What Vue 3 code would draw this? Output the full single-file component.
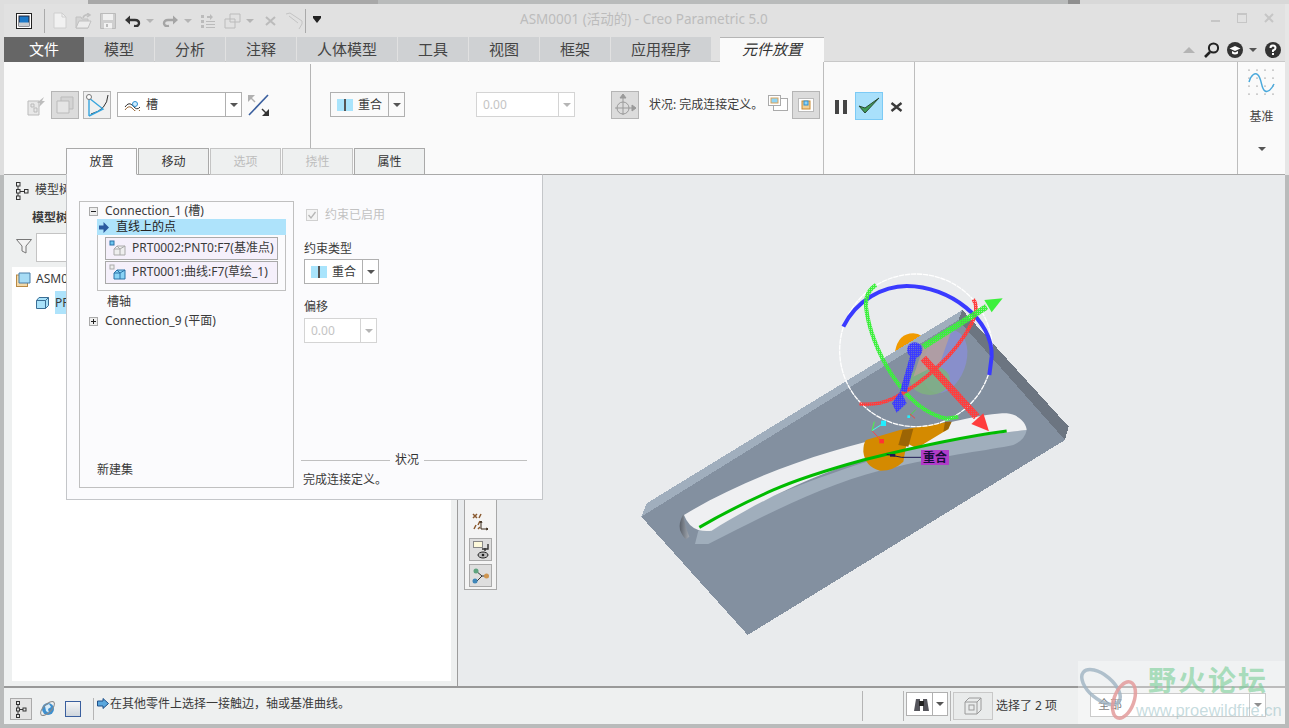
<script setup>
const tabs = [
  { t: '模型', c: '' }, { t: '分析', c: '' }, { t: '注释', c: '' }, { t: '人体模型', c: 'wide' },
  { t: '工具', c: '' }, { t: '视图', c: '' }, { t: '框架', c: '' }, { t: '应用程序', c: 'wide' }
]
const subTabs = [
  { t: '放置', c: 'on' }, { t: '移动', c: '' }, { t: '选项', c: 'off' }, { t: '挠性', c: 'off' }, { t: '属性', c: '' }
]
const dots = [[1,1],[9,1],[17,1],[25,1],[1,9],[9,9],[17,9],[25,9],[1,17],[9,17],[17,17],[25,17],[1,25],[9,25],[17,25],[25,25]]
</script>

<template>
  <div class="window">
    <header class="title">
      <div class="qat">
        <svg class="appicon" width="16" height="16" viewBox="0 0 16 16"><rect x=".5" y=".5" width="15" height="15" fill="#fff" stroke="#222"/><rect x="3" y="3" width="10" height="10" fill="#1b78c8" stroke="#223"/><path d="M3 9.500h6.500V13H3zM9.500 9.500H13V13H9.500z" fill="#c9ccd0"/></svg>
        <i class="qsep first"></i>
        <svg class="q" width="14" height="17" viewBox="0 0 14 17"><path d="M1 1h8l4 4v11H1z" fill="#f1f1f1" stroke="#cfcfcf"/><path d="M9 1v4h4" fill="none" stroke="#cfcfcf"/></svg>
        <svg class="q" width="17" height="16" viewBox="0 0 17 16"><path d="M1 4h5l1 2h6v9H1z" fill="#d4d4d4" stroke="#c0c0c0"/><path d="M1 15l3-7h12l-3 7z" fill="#ececec" stroke="#c0c0c0"/><path d="M8 5q1-4 6-3m-2-2 3 2-3 2" fill="none" stroke="#c0c0c0" stroke-width="1.500"/></svg>
        <svg class="q" width="16" height="16" viewBox="0 0 16 16"><path d="M.5.5h15v15H.5z" fill="#cfcfcf" stroke="#bbb"/><rect x="3" y="1" width="10" height="6" fill="#f0f0f0"/><rect x="4" y="10" width="8" height="5.500" fill="#f2f2f2"/><rect x="6" y="11" width="2" height="3" fill="#bbb"/></svg>
        <svg class="q" width="17" height="12" viewBox="0 0 17 12"><path d="M5 5h6q4 0 4 3.300T10 11" fill="none" stroke="#333" stroke-width="2.400"/><path d="M1 5l5-4.500v9z" fill="#333"/></svg>
        <i class="tri light"></i>
        <svg class="q" width="17" height="12" viewBox="0 0 17 12"><path d="M12 5H6Q2 5 2 8.300T7 11" fill="none" stroke="#a5a5a5" stroke-width="2.400"/><path d="M16 5l-5-4.500v9z" fill="#a5a5a5"/></svg>
        <i class="tri light"></i>
        <svg class="q" width="16" height="16" viewBox="0 0 16 16" fill="#bbb"><path d="M1 2h3v3H1zm0 5h3v3H1zm0 5h3v3H1zm5-4h9v1H6zm0 3h9v1H6zm0 3h9v1H6zM7 3h3V1l3 3-3 3V5H7z"/></svg>
        <svg class="q" width="17" height="16" viewBox="0 0 17 16" fill="none" stroke="#bbb"><path d="M6 1h10v8H6zM1 6h10v9H1z"/></svg>
        <i class="tri light"></i>
        <svg class="q cl" width="13" height="10" viewBox="0 0 13 10" fill="none" stroke="#bbb" stroke-width="2"><path d="M2 1l9 8m0-8L2 9"/></svg>
        <svg class="q ruler" width="18" height="18" viewBox="0 0 18 18" fill="none" stroke="#c4c4c4"><path d="M1 2l4-1 12 8v3l-3 5M4 4l9 7"/></svg>
        <i class="qsep"></i>
        <span class="dropmark"></span>
      </div>
      <div class="caption">ASM0001 (活动的) - Creo Parametric 5.0</div>
      <div class="winctl">
        <i class="wmin"></i><i class="wmax"></i>
        <svg width="10" height="10" viewBox="0 0 10 10"><path d="M1 1l8 8m0-8L1 9" stroke="#c6c6c6" stroke-width="2"/></svg>
      </div>
    </header>

    <nav class="tabs">
      <div class="tab file">文件</div>
      <div v-for="x in tabs" :key="x.t" class="tab" :class="x.c">{{ x.t }}</div>
      <div class="tab active">元件放置</div>
      <div class="tools">
        <svg width="12" height="8" viewBox="0 0 12 8"><path d="M0 7l6-6 6 6z" fill="#b4b4b4"/></svg>
        <svg width="15" height="16" viewBox="0 0 15 16" fill="none" stroke="#222" stroke-width="2"><circle cx="9.500" cy="6" r="4.600"/><path d="M6 10l-5 5" stroke-width="2.600"/></svg>
        <svg width="16" height="16" viewBox="0 0 16 16"><circle cx="8" cy="8" r="8" fill="#333"/><path d="M2.500 6.500 8 4l5.500 2.500L8 9z" fill="#fff"/><path d="M5 9v2.500q3 2 6 0V9L8 10.500z" fill="#fff"/></svg>
        <i class="tri"></i>
        <svg width="16" height="16" viewBox="0 0 16 16"><circle cx="8" cy="8" r="8" fill="#333"/><path d="M5.500 6q0-2.500 2.500-2.500T10.500 6Q10.500 7.500 8 8.500v1.500" fill="none" stroke="#fff" stroke-width="2"/><rect x="7" y="11" width="2" height="2" fill="#fff"/></svg>
      </div>
    </nav>

    <section class="ribbon">
      <div class="group g1">
        <svg class="r-lit" width="19" height="20" viewBox="0 0 19 20"><path d="M1 5h11v14H1z" fill="#e8e8e8" stroke="#bbb"/><path d="M4 8h3v3H4zm3 4h3v4H7z" fill="none" stroke="#bbb"/><path d="M12 5l5-4-2 4h3l-6 6 1-4h-3z" fill="#bdbdbd"/></svg>
        <div class="tbtn gray">
          <svg width="18" height="18" viewBox="0 0 18 18" fill="none" stroke="#bbb"><path d="M5 1h12v12H5z" fill="#d4d4d4"/><path d="M1 5h12v12H1z" fill="#e5e5e5"/></svg>
        </div>
        <div class="tbtn gray">
          <svg width="24" height="24" viewBox="0 0 24 24" fill="none"><path d="M23 2Q22 17 6 21" stroke="#333"/><path d="M4 5v18M4 5l14 11L4 23" stroke="#36a4dd" stroke-width="1.400"/><circle cx="4" cy="4" r="2.500" fill="#fff" stroke="#777"/></svg>
        </div>
        <div class="sel jt">
          <div class="sel-main">
            <svg width="17" height="12" viewBox="0 0 17 12" fill="none"><path d="M1 8q4-6 8-1t7 1" stroke="#333"/><path d="M1 11q4-6 8-1t7 1" stroke="#9a6a3a"/><circle cx="11" cy="5" r="2.500" fill="#cfeeff" stroke="#2f8fd0"/></svg>
            <span>槽</span>
          </div>
          <div class="sel-arrow"><i class="tri"></i></div>
        </div>
        <svg class="flip" width="23" height="23" viewBox="0 0 23 23"><path d="M21 1 2 21" stroke="#3a5f9e" stroke-width="1.600"/><path d="M1 1h7L1 8z" fill="#b0b0b0"/><path d="M4 4l4 4" stroke="#b0b0b0" stroke-width="1.500"/><path d="M22 22h-7l7-7z" fill="#333"/><path d="M19 19l-4-4" stroke="#333" stroke-width="1.500"/></svg>
      </div>

      <div class="group g2">
        <div class="sel con">
          <div class="sel-main">
            <span class="coin"></span><span>重合</span>
          </div>
          <div class="sel-arrow"><i class="tri"></i></div>
        </div>
        <div class="sel num dis">
          <div class="sel-main">0.00</div>
          <div class="sel-arrow"><i class="tri light"></i></div>
        </div>
        <div class="tbtn gray compass">
          <svg width="24" height="24" viewBox="0 0 24 24" fill="none" stroke="#9a9a9a"><circle cx="10" cy="15" r="6"/><path d="M10 5v17M2 15h17"/><path d="M10 1l3 4H7zM23 15l-4 3v-6z" fill="#9a9a9a"/></svg>
        </div>
        <span class="stat">状况: 完成连接定义。</span>
        <svg class="pv" width="20" height="16" viewBox="0 0 20 16"><rect x="5.500" y="3.500" width="14" height="12" fill="#fff" stroke="#aaa"/><rect x=".5" y=".5" width="12" height="10" fill="#fff" stroke="#aaa"/><rect x="3" y="3" width="7" height="5" fill="#8fd4f5" stroke="#d9a35a"/></svg>
        <div class="tbtn gray pv2">
          <svg width="16" height="14" viewBox="0 0 16 14"><rect x=".5" y=".5" width="15" height="13" fill="#fff" stroke="#bbb"/><rect x="4" y="3" width="8" height="8" fill="#f1cf93" stroke="#c98b35"/><rect x="6" y="3" width="4" height="4" fill="#8fd4f5" stroke="#2f8fd0"/></svg>
        </div>
      </div>

      <div class="group g3">
        <div class="pause"><i></i><i></i></div>
        <div class="okbtn">
          <svg width="24" height="20" viewBox="0 0 24 20"><path d="M2 10l6 7L22 2l-14 10z" fill="#3f9c58" stroke="#2b4a33"/></svg>
        </div>
        <svg class="cancel" width="13" height="10" viewBox="0 0 13 10"><path d="M1.500 1l10 8m0-8-10 8" stroke="#3a3a3a" stroke-width="2.400"/></svg>
      </div>

      <div class="group g4"></div>

      <div class="group g5">
        <svg width="28" height="27" viewBox="0 0 28 27"><g fill="#555"><circle v-for="d in dots" :key="d.join()" :cx="d[0]" :cy="d[1]" r=".6"/></g><path d="M1 13C3 6 7 3 10 6 14 10 13 20 17 22 21 24 24 19 26 15" fill="none" stroke="#4aa9dc" stroke-width="1.500"/></svg>
        <span class="base">基准</span>
        <i class="tri base-tri"></i>
      </div>
    </section>

    <main class="main">
      <aside class="left">
        <div class="lh">
          <svg width="14" height="18" viewBox="0 0 14 18" fill="none" stroke="#333"><rect x="1.500" y=".5" width="3.500" height="3.500"/><rect x="1.500" y="7.500" width="3.500" height="3.500"/><rect x="9.500" y="7.500" width="3.500" height="3.500"/><rect x="1.500" y="14" width="3.500" height="3.500"/><path d="M3 4v3m0 4v3m2-4.500h4"/></svg>
          <span>模型树</span>
        </div>
        <div class="lsub">模型树</div>
        <div class="lfilter">
          <svg width="16" height="15" viewBox="0 0 16 15"><path d="M.5.5h15L10 7v7l-4-2V7z" fill="#f2f2f2" stroke="#777"/></svg>
          <div class="finput"></div>
        </div>
        <div class="tree">
          <div class="trow r1">
            <svg width="15" height="15" viewBox="0 0 15 15"><rect x=".5" y="3" width="11" height="11.500" fill="#f3d9a8" stroke="#b98a45"/><path d="M3 1h11v10H3z" fill="#a7dcf5" stroke="#4a7ea8"/></svg>
            <span>ASM0001.ASM</span>
          </div>
          <div class="trow r2">
            <svg width="13" height="12" viewBox="0 0 13 12"><path d="M3 .5h9.500v8l-3 3H.5v-8z" fill="#a9e2fa" stroke="#3b6f96"/><path d="M.5 3.500h9v8m0-8 3-3" fill="none" stroke="#3b6f96"/></svg>
            <span class="hl">PRT0001.PRT</span>
          </div>
        </div>
      </aside>

      <div class="scene">
        <svg class="canvas" width="827" height="511" viewBox="458 175 827 511">
          <defs>
            <pattern id="hr" width="6" height="6" patternUnits="userSpaceOnUse"><path d="M0 0h6v3H3v3H0z" fill="#ff3d3d"/><rect x="3" y="3" width="3" height="3" fill="#ff3d3d" opacity=".45"/></pattern>
            <pattern id="hg" width="6" height="6" patternUnits="userSpaceOnUse"><path d="M0 0h6v3H3v3H0z" fill="#3cf03c"/><rect x="3" y="3" width="3" height="3" fill="#3cf03c" opacity=".45"/></pattern>
            <pattern id="hb" width="6" height="6" patternUnits="userSpaceOnUse"><path d="M0 0h6v3H3v3H0z" fill="#3c3cff"/><rect x="3" y="3" width="3" height="3" fill="#3c3cff" opacity=".45"/></pattern>
            <linearGradient id="wall" x1="0" x2="1"><stop offset="0" stop-color="#5a616b"/><stop offset="1" stop-color="#a3a9b1"/></linearGradient>
          </defs>
          <g transform="translate(630 270) scale(.33333)">
            <path d="M795 245Q805 190 850 190Q880 192 885 215Z" fill="#f09a00"/>
            <g shape-rendering="crispEdges">
              <path d="M997 120 1316 470 1305 510 985 150Z" fill="#6c7581"/>
              <path d="M34 740 985 150 1305 510 353 1095Z" fill="#8390a0"/>
              <path d="M34 740 50 700 997 120 985 150Z" fill="#a0aebd"/>
            </g>
            <path d="M195 822H235C400 740 600 630 800 590 950 555 1080 540 1150 525Q1185 510 1190 480L1000 500C700 560 400 680 205 782Z" fill="#a0aebc"/>
            <path d="M162 735C350 620 600 535 800 495 950 460 1060 430 1130 430 1165 432 1190 460 1190 480 1050 495 850 525 700 570 520 625 350 715 245 782Q225 785 205 780 175 770 162 735Z" fill="#eff0f2"/>
            <path d="M160 733Q145 760 150 780 158 800 168 808L178 800Q165 770 160 733Z" fill="url(#wall)"/>
            <path d="M708 510 810 480 960 455 950 480 860 535 830 520 820 575Q790 603 750 602 705 590 700 545 700 520 708 510Z" fill="#d48a00"/>
            <path d="M818 480 850 476 835 530 805 525Z" fill="#9c6505"/>
            <path d="M945 455H965L955 478 940 485Z" fill="#9c6505"/>
            <path d="M208 772C280 730 350 695 430 660 520 620 620 592 700 570 860 530 1000 500 1130 483" fill="none" stroke="#00bb00" stroke-width="9"/>

            <ellipse cx="945" cy="275" rx="62" ry="98" transform="rotate(20 945 275)" fill="#8a8fd6" opacity=".8"/>
            <ellipse cx="900" cy="330" rx="60" ry="45" fill="#7fb27f" opacity=".85"/>
            <path d="M880 230 965 180 930 280 850 320Z" fill="#b9a09a" opacity=".8"/>

            <circle cx="858" cy="241" r="229" fill="none" stroke="#fff" stroke-width="4" stroke-dasharray="16 2"/>
            <path d="M640 170C680 90 760 48 830 48 960 48 1090 150 1085 260L1078 315" fill="none" stroke="#3a3aff" stroke-width="12"/>
            <path d="M738 45Q705 65 708 110C720 230 820 420 950 446L985 440" fill="none" stroke="url(#hg)" stroke-width="12"/>
            <path d="M1030 88Q1048 115 1025 160C980 250 880 340 790 385Q740 408 688 402" fill="none" stroke="url(#hr)" stroke-width="11"/>

            <path d="M880 230 1070 110" stroke="url(#hg)" stroke-width="18"/>
            <path d="M1118 85 1063 90 1085 127Z" fill="#3cf03c"/>
            <path d="M880 265 1040 440" stroke="url(#hr)" stroke-width="22"/>
            <path d="M1077 484 1024 462 1060 430Z" fill="#ff3d3d"/>
            <path d="M850 260 820 365" stroke="url(#hb)" stroke-width="20"/>
            <circle cx="854" cy="240" r="23" fill="url(#hb)"/>
            <path d="M812 362 830 400 800 428 786 400Z" fill="url(#hb)"/>

            <path d="M726 482 755 513" stroke="#f44" stroke-width="3"/>
            <rect x="748" y="507" width="14" height="13" fill="#f33"/>
            <path d="M726 482 760 460" stroke="#4fe" stroke-width="3"/>
            <path d="M726 482 733 455" stroke="#4f4" stroke-width="3"/>
            <rect x="753" y="452" width="15" height="16" fill="#2ef"/>
            <path d="M837 440 858 418" stroke="#4d4" stroke-width="3"/>
            <path d="M840 432 855 445" stroke="#e44" stroke-width="3"/>
            <rect x="832" y="436" width="8" height="8" fill="#2ef"/>
            <path d="M770 553 815 562H873" fill="none" stroke="#1c1850" stroke-width="3"/>
            <path d="M780 552h16v8h-16z" fill="#1c1850"/>
          </g>
          <rect x="921" y="450" width="28" height="15" fill="#b13cc9"/>
          <text x="935" y="462" class="lbl" text-anchor="middle">重合</text>
        </svg>

        <div class="float">
          <svg class="fl-i" width="18" height="20" viewBox="0 0 18 20" fill="none" stroke-width="1.500"><path d="M1 1l4 4m0-4L1 5M9 1 7 5M8 8 6 12M2 16l2-4M6 16l2-2" stroke="#8a5a30"/><path d="M9 8v8h7M9 8l-1 2m1-2 1 2m6 6-2-1m2 1-2 1" stroke="#3a2a1a" stroke-width="1"/></svg>
          <div class="fbtn">
            <svg width="16" height="18" viewBox="0 0 16 18" fill="none"><rect x=".5" y=".5" width="9" height="6" fill="#fdf9da" stroke="#888"/><path d="M15 3v5H9m3-1v3" stroke="#333" stroke-width="1.400"/><ellipse cx="10" cy="14" rx="5" ry="3" fill="#bbb" stroke="#222"/><circle cx="10" cy="14" r="1.300" fill="#222"/></svg>
          </div>
          <div class="fbtn">
            <svg width="18" height="16" viewBox="0 0 18 16" fill="none"><path d="M4 3l6 5-6 6m6-6h4" stroke="#333"/><circle cx="4" cy="3" r="2.500" fill="#5fa37f"/><circle cx="3" cy="13" r="2.500" fill="#3f86b8"/><circle cx="14.500" cy="8" r="2.500" fill="#cf9550"/></svg>
          </div>
        </div>
      </div>
    </main>

    <footer class="status">
      <div class="sb-btn">
        <svg width="12" height="17" viewBox="0 0 12 17" fill="none" stroke="#333"><rect x="1.500" y=".5" width="3" height="3"/><rect x="1.500" y="7" width="3" height="3"/><rect x="8" y="7" width="3" height="3"/><rect x="1.500" y="13.500" width="3" height="3"/><path d="M3 3.500V7m0 3v3.500m1.500-5H8"/></svg>
      </div>
      <svg class="globe" width="17" height="17" viewBox="0 0 17 17"><circle cx="9" cy="9" r="6" fill="#3e8fce"/><path d="M6 6l4-2 2 3-3 2 1 4-3-2z" fill="#d8ecf8"/><ellipse cx="8.500" cy="8.500" rx="9" ry="4" transform="rotate(-45 8.500 8.500)" fill="none" stroke="#8a8a8a"/></svg>
      <i class="blank"></i>
      <i class="vsep a"></i>
      <svg class="sarrow" width="12" height="11" viewBox="0 0 12 11"><path d="M.5 3h5.500V.5L11.500 5.500 6 10.500V8H.5z" fill="#5aa7dd" stroke="#1e4f88"/></svg>
      <span class="msg">在其他零件上选择一接触边，轴或基准曲线。</span>
      <i class="vsep b"></i>
      <i class="vsep c"></i>
      <div class="sel bino">
        <div class="sel-main">
          <svg width="17" height="15" viewBox="0 0 17 15"><path d="M1 14 3 2h4v12zM10 14V2h4l2 12z" fill="#55555c"/><rect x="6" y="4" width="5" height="5" fill="#222"/></svg>
        </div>
        <div class="sel-arrow"><i class="tri"></i></div>
      </div>
      <i class="vsep d"></i>
      <div class="cubebtn">
        <svg width="18" height="18" viewBox="0 0 18 18" fill="none" stroke="#9a9a9a"><path d="M1 5 5 1h12v12l-4 4H1z"/><path d="M1 5h12v12m0-12 4-4"/><rect x="5" y="8" width="5" height="5"/></svg>
      </div>
      <span class="selinfo">选择了 2 项</span>
      <div class="sel filter">
        <div class="sel-main">全部</div>
        <div class="sel-arrow"><i class="tri"></i></div>
      </div>
    </footer>

    <div class="popup">
      <div class="ptabs">
        <div v-for="x in subTabs" :key="x.t" class="ptab" :class="x.c">{{ x.t }}</div>
      </div>
      <div class="pbody">
        <div class="pleft">
          <div class="node"><i class="box minus"></i><span>Connection_1 (槽)</span></div>
          <div class="hrow">
            <svg width="10" height="11" viewBox="0 0 10 11"><path d="M0 3.500h4.500V0L10 5.500 4.500 11V7.500H0z" fill="#2a5aa0"/></svg>
            <span>直线上的点</span>
          </div>
          <div class="refs">
            <div class="ref">
              <svg width="19" height="17" viewBox="0 0 19 17"><path d="M8 6h8v9H5V9zM8 6l3 3M5 9h6v6m0-6 5-3" fill="#eee" stroke="#aaa"/><rect x="1" y="1" width="4" height="4" fill="#6ec6f0" stroke="#2a72a8"/></svg>
              <span>PRT0002:PNT0:F7(基准点)</span>
            </div>
            <div class="ref second">
              <svg width="19" height="17" viewBox="0 0 19 17"><path d="M8 6h8v9H5V9zM8 6l3 3M5 9h6v6m0-6 5-3" fill="#8ad3f5" stroke="#2a72a8"/><rect x="1" y="1" width="4" height="4" fill="#eee" stroke="#aaa"/></svg>
              <span>PRT0001:曲线:F7(草绘_1)</span>
            </div>
          </div>
          <div class="axis">槽轴</div>
          <div class="node n2"><i class="box plus"></i><span>Connection_9 (平面)</span></div>
          <div class="newset">新建集</div>
        </div>
        <div class="pright">
          <label class="chk">
            <svg width="12" height="12" viewBox="0 0 12 12"><rect x=".5" y=".5" width="11" height="11" fill="#f4f4f4" stroke="#d0d0d0"/><path d="M2.500 6l2.500 3 4.500-6" fill="none" stroke="#b5b5b5" stroke-width="1.300"/></svg>
            <span>约束已启用</span>
          </label>
          <div class="fl t1">约束类型</div>
          <div class="sel con2">
            <div class="sel-main"><span class="coin"></span><span>重合</span></div>
            <div class="sel-arrow"><i class="tri"></i></div>
          </div>
          <div class="fl t2">偏移</div>
          <div class="sel num2 dis">
            <div class="sel-main">0.00</div>
            <div class="sel-arrow"><i class="tri light"></i></div>
          </div>
          <div class="legend"><i class="lg1"></i><span>状况</span><i></i></div>
          <div class="done">完成连接定义。</div>
        </div>
      </div>
    </div>

    <div class="mark">
      <svg class="mark-logo" width="60" height="60" viewBox="0 0 60 60" fill="none"><ellipse cx="22" cy="24" rx="23" ry="12" transform="rotate(40 22 24)" stroke="#9fb3c2" stroke-width="3.500" opacity=".8"/><ellipse cx="45" cy="37" rx="10" ry="19" transform="rotate(20 45 37)" stroke="#e39b9b" stroke-width="3.500" opacity=".85"/></svg>
      <div class="mark-cn">野火论坛</div>
      <div class="mark-en">www.proewildfire.cn</div>
    </div>
  </div>
</template>

<style>
html, body { margin: 0; overflow: hidden; background: #b9bbbb; }
</style>

<style scoped>
.window {
  position: relative; box-sizing: border-box; width: 1289px; height: 728px; padding: 4px;
  display: flex; flex-direction: column; overflow: hidden;
  background:
    linear-gradient(90deg, #dedede 0 88px, #a8a8a8 88px 378px, #b9bbbb 378px 1068px, #8f8f8f 1068px 1080px, #d8d8d8 1080px) 0 0 / 100% 4px no-repeat,
    linear-gradient(#dedede, #dedede) 0 0 / 4px 175px no-repeat,
    linear-gradient(#e6e6e6, #e6e6e6) 100% 0 / 4px 175px no-repeat,
    #b9bbbb;
  font: 12px/1.2 "Noto Sans", "Noto Sans CJK SC", sans-serif; color: #3a3a3a;
}
i { display: block; font-style: normal; }
.tri { width: 0; height: 0; border: 4px solid transparent; border-top: 4px solid #555; border-bottom: 0; }
.tri.light { border-top-color: #b5b5b5; }

.title { position: relative; flex: none; height: 33px; background: #e1e1e1; display: flex; align-items: center; }
.qat { display: flex; align-items: center; padding-left: 12px; height: 33px; }
.qsep { width: 1px; height: 24px; background: #aaa; margin-left: 2px; }
.qsep.first { margin-left: 12px; margin-right: 8px; }
.q { flex: none; margin-right: 8px; }
.qat .tri { margin: 0 8px 0 -3px; }
.qat .cl { margin-left: 2px; }
.qat .ruler { margin-right: 0; }
.dropmark { margin-left: 7px; width: 0; height: 0; border: 4px solid transparent; border-top: 5px solid #222; border-bottom: 0; box-shadow: 0 -2px 0 0 #222; }
.caption { position: absolute; left: 516px; top: 7px; font-size: 13.500px; color: #bcbcbc; white-space: nowrap; }
.winctl { margin-left: auto; display: flex; align-items: center; gap: 17px; padding-right: 11px; margin-bottom: 6px; }
.wmin { width: 9px; height: 2px; background: #c6c6c6; margin-top: 6px; }
.wmax { width: 8px; height: 7px; border: 1px solid #c6c6c6; border-top-width: 2px; }

.tabs { flex: none; height: 25px; display: flex; background: #e1e1e1; box-shadow: inset 0 -1px 0 #c8c8c8; }
.tab { box-sizing: border-box; width: 70px; padding-bottom: 2px; margin-right: 1px; background: #cfd1d3; font-size: 15px; color: #444; display: flex; align-items: center; justify-content: center; }
.tab.wide { width: 100px; }
.tab.file { width: 80px; margin-right: 0; background: #666; color: #fff; }
.tab.active { width: 104px; margin-left: 8px; background: #fafafa; border-top: 1px solid #b5b5b5; font-style: italic; color: #333; }
.tools { margin-left: auto; display: flex; align-items: center; gap: 8px; padding-right: 4px; }
.tools svg:first-child { margin-right: 1px; }
.tools .tri { margin-left: -2px; }

.ribbon { flex: none; height: 113px; box-sizing: border-box; display: flex; background: #fafafa; border-bottom: 1px solid #a8a8a8; }
.group { display: flex; align-items: flex-start; padding-top: 29px; box-sizing: border-box; }
.g1 { width: 307px; padding-left: 23px; height: 84px; border-right: 1px solid #b5b5b5; margin-top: 2px; padding-top: 27px; }
.g2 { width: 512px; padding-left: 19px; }
.g3 { width: 91px; border-left: 1px solid #bdbdbd; padding-left: 11px; height: 112px; }
.g4 { width: 323px; border-left: 1px solid #bdbdbd; }
.g5 { flex: 1; border-left: 1px solid #bdbdbd; flex-direction: column; align-items: center; padding-top: 7px; }
.r-lit { margin-top: 5px; margin-right: 5px; }
.tbtn { flex: none; width: 26px; height: 26px; border: 1px solid #b5b5b5; display: flex; align-items: center; justify-content: center; margin-right: 4px; }
.tbtn.gray { background: #dcdcdc; }
.g1 .tbtn:nth-of-type(2) { background: #f0f0f0; margin-right: 6px; }

.sel { flex: none; box-sizing: border-box; height: 25px; display: flex; background: #fff; border: 1px solid #b0b0b0; }
.sel-main { flex: 1; min-width: 0; display: flex; align-items: center; gap: 5px; padding: 1px 0 0 6px; }
.sel-arrow { flex: none; width: 15px; border-left: 1px solid #b0b0b0; display: flex; align-items: center; justify-content: center; }
.jt { width: 125px; margin-top: 1px; }
.flip { margin: 3px 0 0 5px; }
.con { width: 75px; margin: 1px 71px 0 0; background: #fafafa; }
.coin { width: 16px; height: 12px; background: linear-gradient(90deg, #a9e4fc 0 7px, #555 7px 9px, #a9e4fc 9px); }
.num { width: 99px; margin: 1px 36px 0 0; }
.dis { border-color: #d4d4d4; color: #c4c4c4; }
.dis .sel-arrow { border-color: #d4d4d4; }
.compass { margin-right: 10px; }
.stat { padding-top: 7px; white-space: nowrap; width: 119px; }
.pv { margin: 4px 4px 0 0; }
.pv2 { margin: 0; }
.pause { display: flex; gap: 4px; margin-top: 9px; }
.pause i { width: 4px; height: 14px; background: #444; }
.okbtn { box-sizing: border-box; width: 28px; height: 28px; margin: 1px 7px 0 8px; background: #a9e0fb; border: 1px solid #7ccaf5; display: flex; align-items: center; justify-content: center; }
.cancel { margin-top: 11px; }
.base { margin-top: 14px; color: #444; }
.base-tri { margin-top: 23px; }

.main { flex: none; height: 511px; display: flex; }
.left { flex: none; width: 454px; box-sizing: border-box; background: #eef0f0; border-right: 1px solid #9c9c9c; padding: 0 6px 5px 8px; display: flex; flex-direction: column; }
.lh { height: 31px; display: flex; align-items: center; gap: 6px; padding-left: 3px; }
.lsub { height: 27px; line-height: 24px; padding-left: 20px; font-weight: 700; }
.lfilter { height: 34px; display: flex; gap: 4px; align-items: flex-start; padding-left: 4px; }
.lfilter svg { margin-top: 6px; }
.finput { width: 100px; height: 27px; background: #fff; border: 1px solid #c4c4c4; }
.tree { flex: 1; background: #fff; padding: 1px 0 0 4px; }
.trow { display: flex; align-items: center; gap: 5px; }
.r1 { height: 23px; }
.r2 { height: 23px; padding-left: 20px; gap: 6px; }
.hl { background: #aee3fb; line-height: 23px; }

.scene { position: relative; flex: 1; background: #e9ebed; overflow: hidden; }
.canvas { display: block; position: absolute; left: 0; top: 0; }
.lbl { font-size: 12px; fill: #170c3a; font-weight: 700; font-family: "Noto Sans CJK SC", sans-serif; }
.float { position: absolute; left: 6px; top: 305px; width: 33px; height: 110px; box-sizing: border-box; border: 1px solid #a8a8a8; background: #f4f4f4; display: flex; flex-direction: column; align-items: center; padding-top: 32px; gap: 3px; }
.fl-i { margin-bottom: 2px; }
.fbtn { box-sizing: border-box; width: 23px; height: 23px; background: #dedede; border: 1px solid #aaa; display: flex; align-items: center; justify-content: center; }

.status { position: relative; flex: 1; min-height: 0; box-sizing: border-box; background: #eef0f0; border-top: 2px solid #999; display: flex; align-items: center; }
.sb-btn { flex: none; box-sizing: border-box; width: 22px; height: 22px; margin: 6px 7px 0 6px; border: 1px solid #aaa; background: #e4e4e4; display: flex; align-items: center; justify-content: center; }
.globe { flex: none; margin-top: 5px; }
.blank { flex: none; width: 14px; height: 14px; margin: 5px 0 0 9px; border: 1px solid #3a5f9e; background: linear-gradient(#f6f6f6, #cfd6dd); }
.vsep { flex: none; width: 1px; height: 30px; background: #b5b5b5; }
.vsep.a { margin: 6px 0 0 12px; height: 22px; }
.vsep.c { margin-left: 40px; }
.vsep.d { margin-left: 2px; }
.sarrow { flex: none; margin: -5px 1px 0 3px; }
.msg { flex: none; width: 350px; margin-top: -4px; white-space: nowrap; }
.vsep.b { margin-left: 402px; }
.bino { width: 42px; height: 24px; margin: -4px 0 0 2px; }
.bino .sel-arrow { width: 14px; }
.cubebtn { flex: none; box-sizing: border-box; width: 40px; height: 28px; margin: 0 3px 0 2px; background: #e9ebeb; border: 1px solid #c8c8c8; display: flex; align-items: center; justify-content: center; }
.selinfo { flex: none; width: 94px; white-space: nowrap; }
.filter { width: 176px; height: 24px; margin-top: -2px; }
.filter .sel-main { padding-left: 7px; }

.popup { position: absolute; left: 66px; top: 148px; width: 477px; }
.ptabs { display: flex; gap: 1px; height: 26px; position: relative; z-index: 1; }
.ptab { box-sizing: border-box; width: 71px; height: 27px; padding-top: 1px; border: 1px solid #a9a9a9; background: #eef0f0; display: flex; align-items: center; justify-content: center; color: #333; }
.ptab.on { background: #fbfbfd; border-bottom-color: #fbfbfd; }
.ptab.off { color: #bdbdbd; border-color: #c4c4c4; }
.pbody { box-sizing: border-box; height: 326px; display: flex; background: #fbfbfd; border: 1px solid #c4c6c9; border-top-color: #a9a9a9; padding: 26px 0 0 12px; }
.pleft { flex: none; box-sizing: border-box; width: 215px; height: 287px; border: 1px solid #c0c0c0; position: relative; padding: 1px 7px 0 9px; }
.node { box-sizing: border-box; display: flex; align-items: center; gap: 7px; height: 16px; padding-top: 1px; white-space: nowrap; }
.box { flex: none; box-sizing: border-box; position: relative; width: 9px; height: 9px; border: 1px solid #aaa; background: #eee; }
.box::before { content: ""; position: absolute; left: 1px; right: 1px; top: 3px; height: 1px; background: #222; }
.plus::after { content: ""; position: absolute; top: 1px; bottom: 1px; left: 3px; width: 1px; background: #222; }
.hrow { box-sizing: border-box; margin-left: 8px; height: 16px; display: flex; align-items: center; gap: 7px; padding: 1px 0 0 2px; background: #aee3fb; color: #222; }
.refs { box-sizing: border-box; margin-left: 8px; height: 56px; border: 1px solid #c0c0c0; border-top: 0; padding: 2px 7px 0; }
.ref { box-sizing: border-box; height: 23px; display: flex; align-items: center; gap: 4px; padding-left: 3px; background: #f5f0fb; border: 1px solid #a9a9a9; white-space: nowrap; overflow: hidden; }
.ref.second { margin-top: 1px; }
.axis { margin: 3px 0 0 18px; height: 16px; line-height: 16px; }
.n2 { margin-top: 3px; }
.newset { position: absolute; left: 17px; bottom: 10px; }
.pright { flex: 1; padding: 6px 0 0 10px; position: relative; }
.chk { display: flex; align-items: center; gap: 7px; height: 16px; padding-left: 2px; color: #c2c2c2; }
.fl { line-height: 15px; }
.t1 { margin-top: 18px; height: 18px; }
.con2 { width: 75px; }
.t2 { margin-top: 15px; height: 19px; }
.num2 { width: 73px; }
.legend { position: absolute; left: 7px; top: 252px; width: 226px; display: flex; align-items: center; gap: 5px; color: #333; }
.legend i { flex: 1; height: 1px; background: #c0c0c0; }
.legend .lg1 { flex: none; width: 89px; }
.done { position: absolute; left: 9px; top: 272px; }

.mark { position: absolute; left: 1078px; top: 661px; width: 207px; height: 63px; background: rgba(255,255,255,.35); pointer-events: none; }
.mark-logo { position: absolute; left: 1px; top: 2px; }
.mark-cn { position: absolute; left: 70px; top: 0; font: 700 28px/36px "Noto Sans CJK SC", sans-serif; letter-spacing: 2px; color: rgba(120,205,150,.6); white-space: nowrap; }
.mark-en { position: absolute; left: 58px; top: 37px; font: 16.500px/24px "Liberation Sans", sans-serif; color: rgba(150,190,195,.55); white-space: nowrap; }
</style>
